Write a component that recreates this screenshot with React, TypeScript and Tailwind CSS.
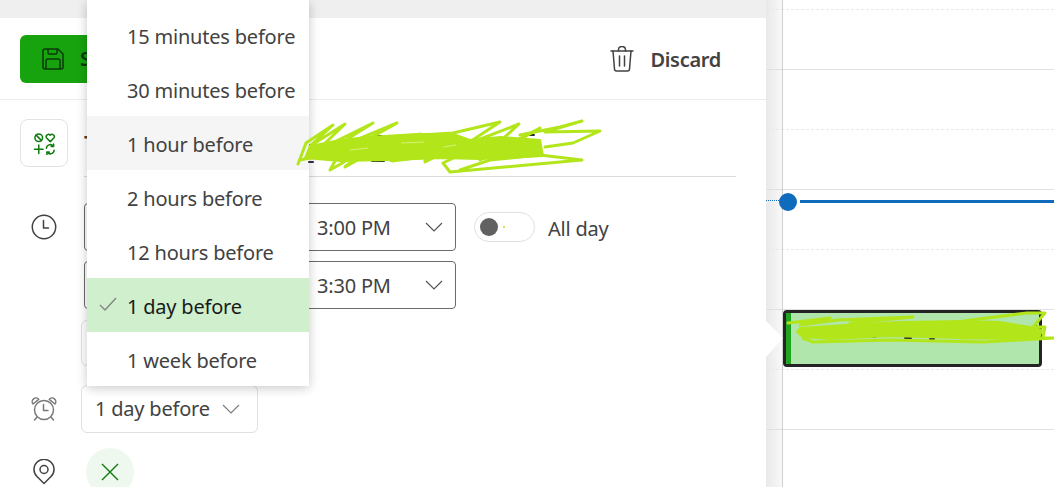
const Chevron = ({ size = 20, color = "#505050" }: { size?: number; color?: string }) => (
  <svg width={size} height={size} viewBox="0 0 20 20" fill="none" stroke={color} strokeWidth="1.1">
    <polyline points="2,6 10,14 18,6" />
  </svg>
);

const items = [
  { label: "15 minutes before" },
  { label: "30 minutes before" },
  { label: "1 hour before", hover: true },
  { label: "2 hours before" },
  { label: "12 hours before" },
  { label: "1 day before", selected: true },
  { label: "1 week before" },
];

function Dropdown() {
  return (
    <div className="absolute left-[87px] top-0 w-[222px] h-[386px] pt-[8px] bg-white shadow-[0_2px_10px_rgba(0,0,0,0.22)] z-10">
      {items.map((it) => (
        <div
          key={it.label}
          className={`relative h-[54px] flex items-center pl-[40px] pt-[4px] text-[20px] whitespace-nowrap ${
            it.selected ? "bg-[#cfefcd] text-[#1a1a1a]" : it.hover ? "bg-[#f5f5f5] text-[#424242]" : "text-[#424242]"
          }`}
        >
          {it.selected && (
            <svg className="absolute left-[12px] top-[19px]" width="18" height="14" viewBox="0 0 18 14" fill="none" stroke="#858585" strokeWidth="1.4">
              <polyline points="1,8 6,13 17,1" />
            </svg>
          )}
          {it.label}
        </div>
      ))}
    </div>
  );
}

function CalendarPane() {
  const rows = [
    "h-[10px] border-dashed border-[#e8e8e8]",
    "h-[60px] border-solid border-[#e0e0e0]",
    "h-[60px] border-dashed border-[#e8e8e8]",
    "h-[60px] border-solid border-[#e0e0e0]",
    "h-[60px] border-dashed border-[#e8e8e8]",
    "h-[60px] border-solid border-[#e0e0e0]",
    "h-[60px] border-dashed border-[#e8e8e8]",
    "h-[60px] border-solid border-[#e0e0e0]",
    "h-[60px] border-dashed border-[#e8e8e8]",
  ];
  return (
    <div className="relative flex-1 h-full overflow-hidden bg-[linear-gradient(to_right,#e9e9e9,#f8f8f8_16px,#ffffff_16px)]">
      {rows.map((r, i) => (
        <div key={i} className={`border-b ${r}`} />
      ))}
      <div className="absolute left-[16px] top-0 bottom-0 w-px bg-[#cfcfcf]" />
      <div className="absolute left-0 top-[200px] w-[13px] border-t border-dotted border-[#0f6cbd]" />
      <div className="absolute left-[34px] right-0 top-[200px] h-[3px] bg-[#0f6cbd]" />
      <div className="absolute left-[13px] top-[193px] w-[18px] h-[18px] rounded-full bg-[#0f6cbd]" />
      <div className="absolute left-[17px] top-[310px] w-[259px] h-[57px] rounded-[4px] border-[3px] border-[#242424] bg-[#b0e5ab] overflow-hidden">
        <div className="w-[5px] h-full bg-[#1fa51f]" />
      </div>
    </div>
  );
}

function Scribbles() {
  return (
    <svg className="absolute inset-0 z-20 pointer-events-none" width="1054" height="487" viewBox="0 0 1054 487" fill="none" stroke="#b2e61a" strokeWidth="3" strokeLinecap="round" strokeLinejoin="round">
      <g stroke="#2b2b3a" strokeWidth="2">
        <path d="M310 145h3M309 162h4M372 161h12M416 153h8M480 152h4M492 141v8M526 135h8M376 136h6" />
      </g>
      <polygon fill="#b2e61a" strokeWidth="2" points="310,146 340,140 368,137 417,134 453,134 470,140 500,137 540,140 543,156 480,159 440,158 390,160 340,161 305,158" />
      <polyline points="298,164 306,143 333,125 310,146 345,124 318,150 373,123 325,153 397,123 335,158 420,134" />
      <polyline points="300,160 340,152 330,170 365,150 345,167 372,152 392,161 425,157 425,162 445,152" />
      <polyline points="420,135 453,133 500,122 465,145 519,124 480,160 540,128 488,158" />
      <polyline points="520,135 560,127 582,121 545,132 600,131 573,143 545,147" />
      <polyline points="470,150 443,163 450,172 582,160 540,155 490,160 460,170" />
      <path d="M402 143l22-1M444 147l12-2M350 150l18-2" stroke="#d9f07a" strokeWidth="1" />
      <g stroke="#2b2b3a" strokeWidth="2">
        <path d="M870 337h5M905 338h6M930 339h4M965 338h5M1000 337h4M1036 325v5" />
      </g>
      <polygon fill="#b2e61a" strokeWidth="2" points="800,328 860,324 900,322 963,321 1000,322 1030,327 1042,330 1040,336 960,338 890,336 830,339 803,337 797,332" />
      <polyline points="788,323 830,318 800,325 838,320 913,317 850,323" />
      <polyline points="963,321 1027,313 1045,313 1033,327 1045,327 1043,337" />
      <polyline points="803,338 813,342 890,340 983,342 1054,338 960,338" />
    </svg>
  );
}

function SaveIcon() {
  return (
    <svg width="24" height="24" viewBox="0 0 24 24" fill="none" stroke="#0c3a0c" strokeWidth="1.5" strokeLinejoin="round">
      <path d="M4 2h13l5 5v13a2 2 0 0 1-2 2H4a2 2 0 0 1-2-2V4a2 2 0 0 1 2-2z" />
      <path d="M7 2v4a1 1 0 0 0 1 1h7a1 1 0 0 0 1-1V2" />
      <path d="M5 22v-8a2 2 0 0 1 2-2h10a2 2 0 0 1 2 2v8" />
    </svg>
  );
}

function CategoryIcon() {
  return (
    <svg width="23" height="23" viewBox="0 0 24 24" fill="none" stroke="#107c10" strokeWidth="1.6" strokeLinecap="round" strokeLinejoin="round">
      <circle cx="6" cy="6" r="4" />
      <line x1="3.3" y1="3.3" x2="8.7" y2="8.7" />
      <path d="M18 10 L14 6 a2.4 2.4 0 0 1 4-2.6 a2.4 2.4 0 0 1 4 2.6 z" />
      <line x1="6" y1="13.5" x2="6" y2="22.5" />
      <line x1="1.5" y1="18" x2="10.5" y2="18" />
      <path d="M14 17 a4 4 0 0 1 7-2.4 M22 19 a4 4 0 0 1-7 2.4" />
      <polyline points="21.5,12.5 21.5,15 19,15" />
      <polyline points="14.5,23.5 14.5,21 17,21" />
    </svg>
  );
}

function ClockIcon() {
  return (
    <svg width="26" height="26" viewBox="0 0 26 26" fill="none" stroke="#424242" strokeWidth="1.5" strokeLinecap="round" strokeLinejoin="round">
      <circle cx="13" cy="13" r="11.7" />
      <polyline points="12.5,6.5 12.5,14 17.5,14" />
    </svg>
  );
}

function AlarmIcon() {
  return (
    <svg width="26" height="26" viewBox="0 0 26 26" fill="none" stroke="#7a7a7a" strokeWidth="1.5" strokeLinecap="round" strokeLinejoin="round">
      <circle cx="13" cy="14" r="9.5" />
      <polyline points="12.5,8.5 12.5,14.5 17,14.5" />
      <path d="M2 8 a3.6 3.6 0 0 1 5.8-4.6 z" />
      <path d="M24 8 a3.6 3.6 0 0 0-5.8-4.6 z" />
      <line x1="6" y1="21" x2="3.5" y2="24" />
      <line x1="20" y1="21" x2="22.5" y2="24" />
    </svg>
  );
}

function PinIcon() {
  return (
    <svg width="22" height="26" viewBox="0 0 22 26" fill="none" stroke="#424242" strokeWidth="1.5" strokeLinejoin="round">
      <path d="M11 24.5 L4 17.5 a10 10 0 1 1 14 0 z" />
      <circle cx="11" cy="10.5" r="4" />
    </svg>
  );
}

function TrashIcon() {
  return (
    <svg width="24" height="26" viewBox="0 0 24 26" fill="none" stroke="#424242" strokeWidth="1.5" strokeLinecap="round" strokeLinejoin="round">
      <path d="M1 5h22" />
      <path d="M8.5 5V3.5a3.5 3 0 0 1 7 0V5" />
      <path d="M3 5l1.5 18a2 2 0 0 0 2 2h11a2 2 0 0 0 2-2L21 5" />
      <path d="M9.5 10v10M14.5 10v10" />
    </svg>
  );
}

function DateTimeRow({ time, extra }: { time: string; extra?: boolean }) {
  return (
    <div className="flex items-start">
      <div className="flex h-[48px] ml-[84px]">
        <div className="w-[214px] h-full border border-[#6b6b6b] rounded-[4px]" />
        <div className="ml-[2px] w-[156px] h-full border border-[#6b6b6b] rounded-[4px] pl-[16px] pr-[11px] flex items-center justify-between text-[20px] text-[#424242]">
          <span className="pt-[2px]">{time}</span>
          <Chevron />
        </div>
      </div>
      {extra && (
        <div className="flex items-center h-[48px] ml-[18px]">
          <div className="relative w-[61px] h-[30px] border border-[#e0e0e0] rounded-full">
            <div className="absolute left-[5px] top-[5px] w-[18px] h-[18px] rounded-full bg-[#616161]" />
            <div className="absolute left-[28px] top-[13px] w-[2px] h-[2px] rounded-full bg-[#b2e61a]" />
          </div>
          <span className="ml-[13px] pt-[3px] text-[20px] text-[#424242]">All day</span>
        </div>
      )}
    </div>
  );
}

export default function App() {
  return (
    <div className="relative w-[1054px] h-[487px] overflow-hidden bg-white flex tracking-[-0.2px] font-['Noto_Sans','Open_Sans',sans-serif]">
      <div className="w-[766px] h-full flex flex-col shrink-0">
        <div className="h-[18px] bg-[#efefef] shrink-0" />
        <div className="h-[82px] shrink-0 border-b border-[#ececec] flex items-center justify-between pl-[20px] pr-[45px]">
          <div className="w-[120px] h-[48px] rounded-[6px] bg-[#16a30e] flex items-center pl-[21px] gap-[15px] text-[20px] font-semibold text-[#0c3a0c]">
            <SaveIcon />
            <span>Save</span>
          </div>
          <div className="flex items-center gap-[16px] text-[20px] font-semibold text-[#424242] tracking-[-0.3px]">
            <TrashIcon />
            <span className="pt-[3px]">Discard</span>
          </div>
        </div>
        <div className="h-[77px] shrink-0 flex pl-[20px] pr-[30px]">
          <div className="mt-[19px] w-[48px] h-[48px] border border-[#e3e3e3] rounded-[8px] flex items-center justify-center">
            <CategoryIcon />
          </div>
          <div className="ml-[16px] flex-1 border-b border-[#dcdcdc] text-[22px] font-semibold text-[#424242] pt-[28px] leading-[30px]">T</div>
        </div>
        <div className="relative pt-[26px] flex flex-col gap-[10px]">
          <div className="absolute left-[31px] top-[37px]"><ClockIcon /></div>
          <DateTimeRow time="3:00 PM" extra />
          <DateTimeRow time="3:30 PM" />
        </div>
        <div className="ml-[81px] mt-[11px] w-[200px] h-[46px] shrink-0 border border-[#e0e0e0] rounded-[6px]" />
        <div className="flex items-center mt-[19px] h-[48px] shrink-0">
          <div className="ml-[31px] w-[50px]"><AlarmIcon /></div>
          <div className="w-[177px] h-full border border-[#e0e0e0] rounded-[6px] pl-[13px] flex items-center gap-[11px] text-[20px] text-[#424242] whitespace-nowrap">
            <span>1 day before</span>
            <Chevron color="#7a7a7a" />
          </div>
        </div>
        <div className="flex items-center mt-[15px] h-[48px] shrink-0">
          <div className="ml-[33px] w-[53px]"><PinIcon /></div>
          <div className="w-[48px] h-[48px] rounded-full bg-[#eff8ee] flex items-center justify-center">
            <svg width="20" height="20" viewBox="0 0 20 20" fill="none" stroke="#107c10" strokeWidth="1.4"><path d="M2 2l16 16M18 2L2 18" /></svg>
          </div>
        </div>
      </div>
      <CalendarPane />
      <svg className="absolute left-[766px] top-[318px] z-[5]" width="18" height="42" viewBox="0 0 18 42" fill="#ffffff"><polygon points="0,3 17,20 0,39" /></svg>
      <Dropdown />
      <Scribbles />
    </div>
  );
}
